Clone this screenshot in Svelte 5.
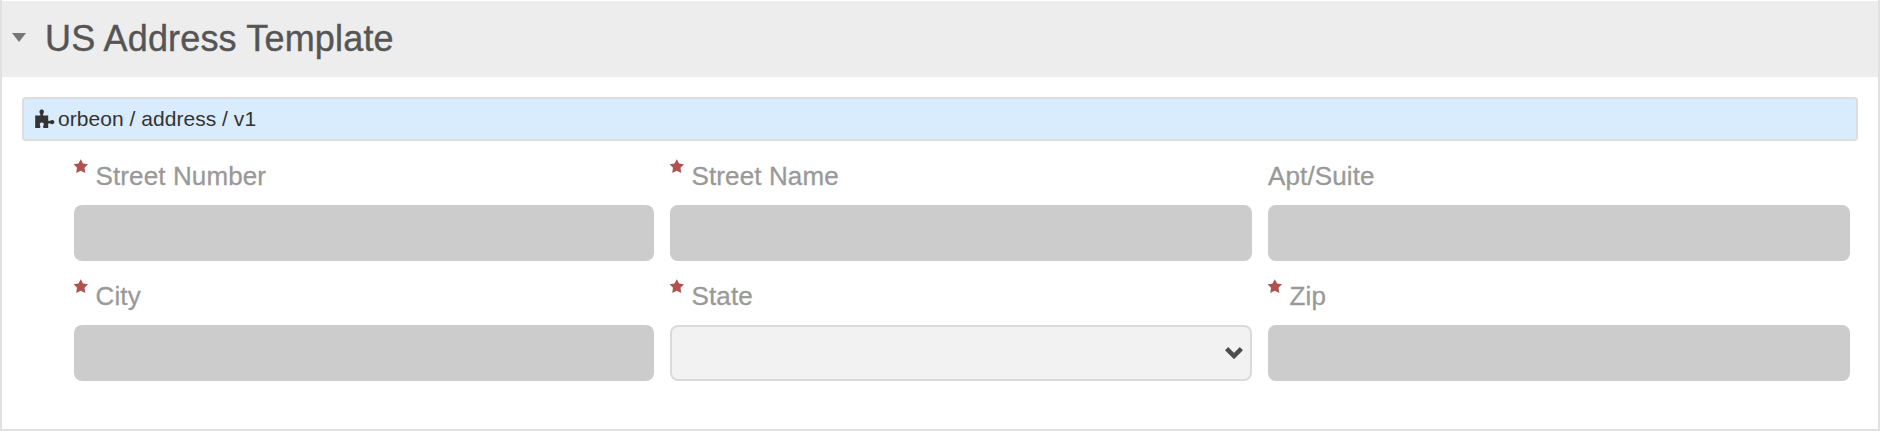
<script>
  const fields = [
    { label: 'Street Number', required: true },
    { label: 'Street Name', required: true },
    { label: 'Apt/Suite', required: false },
    { label: 'City', required: true },
    { label: 'State', required: true, select: true },
    { label: 'Zip', required: true }
  ];
</script>

<section class="panel">
  <header class="head">
    <svg class="caret" width="14" height="9" viewBox="0 0 14 9"><path d="M0 0H14L7 9Z" /></svg>
    <h2>US Address Template</h2>
  </header>
  <div class="body">
    <div class="info">
      <svg class="puzzle" width="20" height="20" viewBox="0 0 20 20">
        <path d="M0.2 6.5H4.4C5.5 6.5 5.7 6 5.2 5C3.9 3 4.4 0.6 6.7 0.6C9 0.6 9.5 3 8.2 5C7.7 6 7.9 6.5 9 6.5H13.2V11C13.2 12.1 13.8 12.4 15 11.8C17 10.5 19.4 10.9 19.4 13.1C19.4 15.4 17 15.8 15 14.5C13.8 13.9 13.2 14.2 13.2 15.3V18.9H8.7C7.9 18.4 8 17.5 8.5 16.4C9.2 14.6 8.6 13.6 6.8 13.6C5 13.6 4.4 14.6 5 16.4C5.5 17.5 5.6 18.4 4.8 18.9H0.2Z" />
      </svg>
      <span>orbeon / address / v1</span>
    </div>
    <div class="grid">
      {#each fields as field}
        <div class="field">
          <div class="label">
            {#if field.required}
              <svg class="star" width="15" height="15" viewBox="0 0 15 15">
                <path d="M6.8 0.2L9.1 4.6L14 5.3L10.5 8.8L11.3 14L6.8 11.7L2.2 14L3 8.8L-0.4 5.3L4.5 4.6Z" />
              </svg>
            {/if}
            <span>{field.label}</span>
          </div>
          <div class="control" class:select={field.select}>
            {#if field.select}
              <svg class="chevron" width="18" height="12" viewBox="0 0 18 12"><path d="M1.6 1.6L9 9L16.4 1.6" /></svg>
            {/if}
          </div>
        </div>
      {/each}
    </div>
  </div>
</section>

<style>
  :global(body) {
    margin: 0;
    background: #fff;
  }
  .panel {
    box-sizing: border-box;
    height: 431px;
    padding-top: 1px;
    border: 2px solid #e1e1e1;
    border-top: 0;
    font-family: 'Liberation Sans', Arial, sans-serif;
  }
  .head {
    display: flex;
    align-items: center;
    gap: 19px;
    height: 76px;
    padding-left: 10px;
    box-sizing: border-box;
    background: #ededed;
  }
  .caret {
    fill: #777;
    margin-bottom: 4px;
  }
  h2 {
    margin: 0;
    font-size: 36px;
    line-height: 40px;
    font-weight: 400;
    letter-spacing: 0.17px;
    color: #555;
    -webkit-text-stroke: 0.4px #555;
  }
  .body {
    padding: 20px 20px 0;
  }
  .info {
    box-sizing: border-box;
    display: flex;
    align-items: center;
    gap: 3px;
    height: 44px;
    padding-left: 11px;
    border: 2px solid #ddd;
    border-radius: 4px;
    background: #d8ecfe;
    color: #333;
    font-size: 21px;
    line-height: 24px;
    letter-spacing: 0.04px;
  }
  .puzzle {
    fill: #333;
    margin-bottom: 1px;
  }
  .grid {
    display: grid;
    grid-template-columns: 580px 582px 582px;
    column-gap: 16px;
    row-gap: 20px;
    padding: 20px 0 0 52px;
  }
  .label {
    display: flex;
    gap: 6.5px;
    height: 44px;
    color: #999;
    font-size: 26px;
    line-height: 30px;
    letter-spacing: 0.12px;
    -webkit-text-stroke: 0.3px #999;
  }
  .star {
    overflow: visible;
    fill: #ae5350;
    margin-top: -2px;
  }
  .control {
    box-sizing: border-box;
    display: flex;
    align-items: center;
    justify-content: flex-end;
    height: 56px;
    border-radius: 8px;
    background: #ccc;
  }
  .select {
    padding-right: 7px;
    border: 2px solid #dadada;
    background: #f2f2f2;
  }
  .chevron {
    fill: none;
    stroke: #4d4d4d;
    stroke-width: 4.5;
  }
</style>
